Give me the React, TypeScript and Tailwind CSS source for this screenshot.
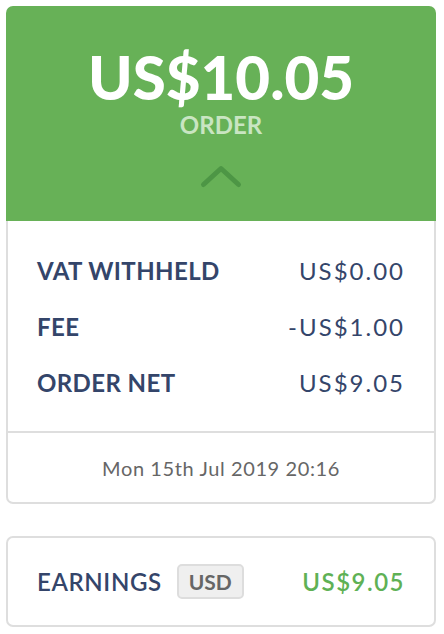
export default function App() {
  const rows = [
    { label: "VAT WITHHELD", value: "US$0.00" },
    { label: "FEE", value: "-US$1.00" },
    { label: "ORDER NET", value: "US$9.05" },
  ];

  return (
    <div
      className="min-h-screen bg-white pt-[6px] pl-[6px]"
      style={{ fontFamily: "Lato, 'Noto Sans', sans-serif" }}
    >
      <div className="w-[430px]">
        {/* order header */}
        <div className="flex flex-col items-center rounded-t-[7px] bg-[#67b157] pt-[43px] pb-[32px]">
          <div className="text-[60px] font-black leading-[56px] text-white">US$10.05</div>
          <div className="mt-[8px] text-[24px] font-bold leading-none text-[#c9e5c2]">ORDER</div>
          <svg className="mt-[26px]" width="44" height="26" viewBox="0 0 44 26" fill="none">
            <path
              d="M4.5 21.5 L22 5.5 L39.5 21.5"
              stroke="#4d9645"
              strokeWidth="5"
              strokeLinecap="round"
              strokeLinejoin="round"
            />
          </svg>
        </div>

        <div className="rounded-b-[7px] border-x-2 border-b-2 border-[#dedede]">
          <div className="px-[29px] pt-[22px] pb-[20px]">
            {rows.map((r) => (
              <div key={r.label} className="flex h-[56px] items-center justify-between text-[24px] text-[#34456a]">
                <span className="font-bold tracking-[0.4px]">{r.label}</span>
                <span className="tracking-[2px]">{r.value}</span>
              </div>
            ))}
          </div>
          <div className="flex h-[71px] items-center justify-center border-t-2 border-[#dedede] text-[20px] text-[#666666] tracking-[0.6px]">
            Mon 15th Jul 2019 20:16
          </div>
        </div>

        {/* earnings */}
        <div className="mt-[32px] flex h-[91px] items-center justify-between rounded-[7px] border-2 border-[#dedede] px-[29px]">
          <div className="flex items-center gap-[15px]">
            <span className="text-[24px] font-semibold tracking-[0.6px] text-[#34456a]">EARNINGS</span>
            <span className="flex h-[35px] w-[67px] items-center justify-center rounded-[5px] border-2 border-[#dddddd] bg-[#efefef] text-[21px] font-bold text-[#666666]">
              USD
            </span>
          </div>
          <span className="text-[24px] font-semibold tracking-[1.5px] text-[#5fb155]">US$9.05</span>
        </div>
      </div>
    </div>
  );
}
